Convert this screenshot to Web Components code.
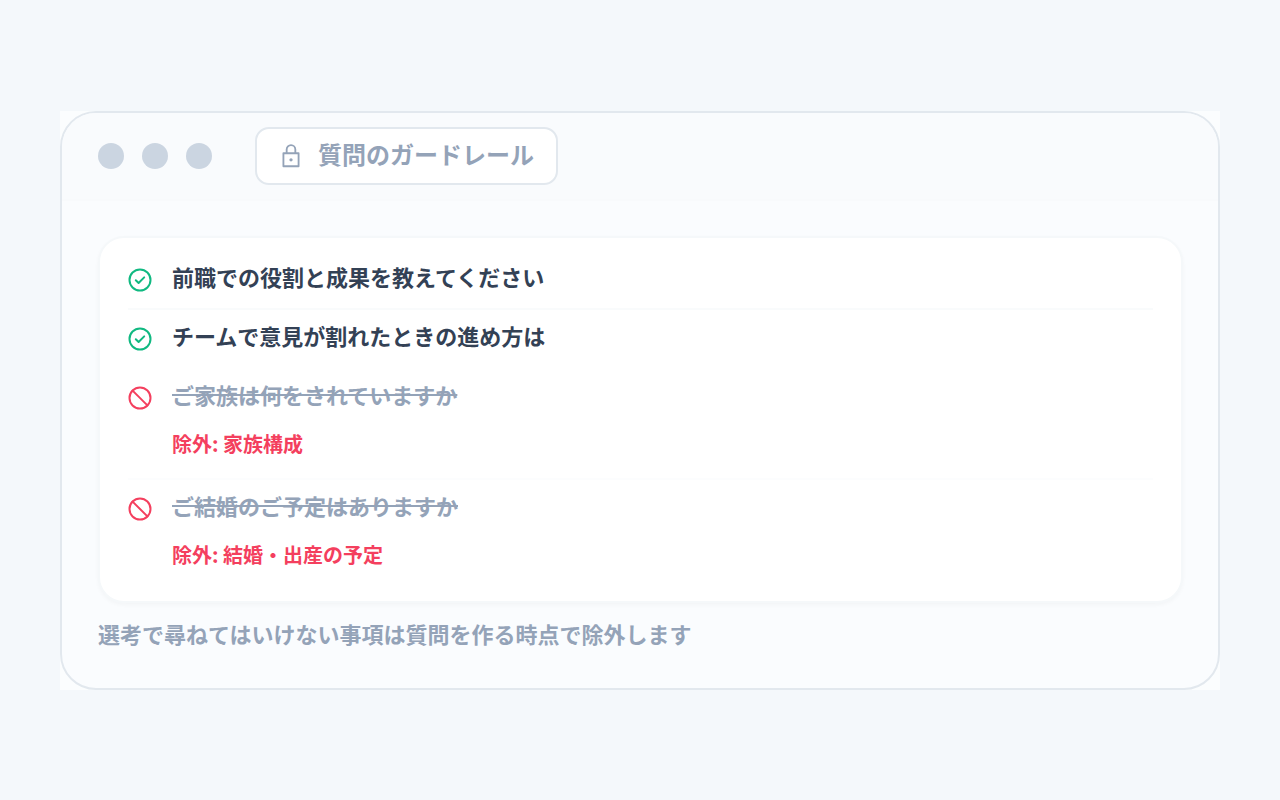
<!DOCTYPE html>
<html lang="ja">
<head>
<meta charset="utf-8">
<meta name="viewport" content="width=device-width, initial-scale=1">
<title>質問のガードレール</title>
<style>
body{margin:0;min-height:100vh;box-sizing:border-box;padding:0 60px;display:flex;flex-direction:column;justify-content:center;background:#f4f8fb;font-family:"Noto Sans CJK JP",sans-serif;font-weight:700;color:#334155}
</style>
</head>
<body>
<guard-window>
  <span slot="title">質問のガードレール</span>
  <question-list>
    <question-item state="ok" divided>前職での役割と成果を教えてください</question-item>
    <question-item state="ok">チームで意見が割れたときの進め方は</question-item>
    <question-item state="blocked" divided>ご家族は何をされていますか<span slot="reason">除外: 家族構成</span></question-item>
    <question-item state="blocked">ご結婚のご予定はありますか<span slot="reason">除外: 結婚・出産の予定</span></question-item>
  </question-list>
  <span slot="note">選考で尋ねてはいけない事項は質問を作る時点で除外します</span>
</guard-window>

<template id="window-template">
<style>
:host{display:block;background:#fbfdfe}
section{border:2px solid #e2e8ee;border-radius:36px;background:#fafcfe;overflow:hidden}
header{display:flex;align-items:center;gap:43px;padding:14px 36px;background:#f9fbfd;border-bottom:2px solid #f8fafc}
.dots{display:flex;gap:18px}
.dots i{width:26px;height:26px;border-radius:50%;background:#cbd5e1}
.tab{display:flex;align-items:center;gap:14px;padding:0 22px 0 21px;height:54px;border:2px solid #e2e8ee;border-radius:14px;background:#fff;color:#94a3b8;font-size:24px}
svg{width:26px;height:26px;flex:none}
h1{margin:0;font:inherit;line-height:34px;padding-bottom:4px}
main{padding:35px 35px 37px 36px}
p{margin:12px 0 0;color:#94a3b8;font-size:22px;line-height:36px}
</style>
<section>
  <header>
    <div class="dots"><i></i><i></i><i></i></div>
    <div class="tab">
      <svg viewBox="0 0 24 24" fill="none" stroke="currentColor" stroke-width="1.700" stroke-linejoin="round" aria-hidden="true"><path d="M5 9.500h14v12H5z"/><path d="M8 9.500V6a4 4 0 0 1 8 0v3.500"/><circle cx="12" cy="15.500" r="1.500" fill="currentColor" stroke="none"/></svg>
      <h1><slot name="title"></slot></h1>
    </div>
  </header>
  <main><slot></slot><p><slot name="note"></slot></p></main>
</section>
</template>

<template id="list-template">
<style>
:host{display:block;padding:13px 28px 10px;border:2px solid #f5f8fa;border-radius:26px;background:#fff;box-shadow:0 2px 4px rgba(15,23,42,.03)}
</style>
<div role="list"><slot></slot></div>
</template>

<template id="item-template">
<style>
:host{display:flex;gap:20px;padding:8px 0 7px;border-bottom:2px solid transparent}
:host([divided]){border-bottom-color:#f9fbfc}
:host([state=blocked]){padding-bottom:14px}
:host([state=blocked][divided]){border-bottom-color:#fcfdfe}
svg{width:24px;height:24px;flex:none;margin-top:9px;fill:none;stroke:#10b981;stroke-width:2;stroke-linecap:round;stroke-linejoin:round}
.block{display:none}
:host([state=blocked]) .block{display:inline}
:host([state=blocked]) .check{display:none}
:host([state=blocked]) svg{stroke:#f43f5e}
.question{font-size:22px;line-height:34px;padding-bottom:8px}
:host([state=blocked]) .question{color:#94a3b8;text-decoration:line-through;text-decoration-thickness:2px}
.reason{display:none;color:#f43f5e;font-size:20px;line-height:40px;padding:5px 0 0}
:host([state=blocked]) .reason{display:block}
</style>
<svg viewBox="0 0 24 24" aria-hidden="true"><circle cx="12" cy="12" r="10.500"/><path class="check" d="M7.800 12.300l2.800 2.700 5.600-5.600"/><path class="block" d="M4.600 4.600l14.800 14.800"/></svg>
<div><div class="question"><slot></slot></div><div class="reason"><slot name="reason"></slot></div></div>
</template>

<script>
const attach = (element, id) => element.attachShadow({mode:"open"}).append(document.getElementById(id).content.cloneNode(true));
customElements.define("guard-window", class extends HTMLElement{constructor(){super();attach(this,"window-template")}});
customElements.define("question-list", class extends HTMLElement{constructor(){super();attach(this,"list-template")}});
customElements.define("question-item", class extends HTMLElement{
  constructor(){super();attach(this,"item-template")}
  connectedCallback(){this.setAttribute("role","listitem")}
});
</script>
</body>
</html>
